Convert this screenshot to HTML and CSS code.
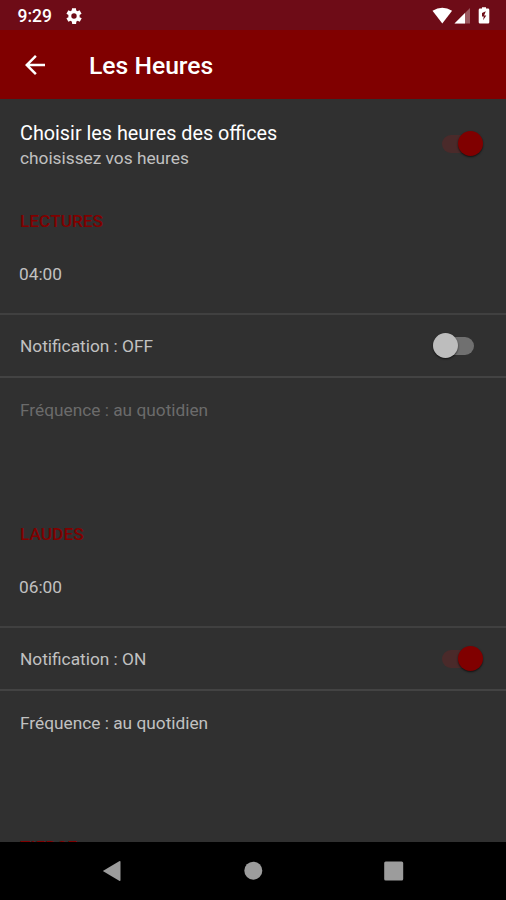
FILE: index.html
```html
<!DOCTYPE html>
<html lang="fr">
<head>
<meta charset="utf-8">
<title>Les Heures</title>
<link rel="stylesheet" href="styles.css">
</head>
<body>
<div class="screen">
  <div class="status">
    <span class="clock">9:29</span>
    <svg class="gear" width="18" height="18" viewBox="0 0 24 24"><path fill="#fff" fill-rule="evenodd" d="M19.400 13.500a7.800 7.800 0 0 0 0-3l2.700-1.600-2.600-4.500-2.900 1.200a8 8 0 0 0-1.700-1L14.600 1.500H9.400l-.5 3.100a8 8 0 0 0-1.700 1L4.500 4.400 1.900 8.900l2.700 1.600a7.800 7.800 0 0 0 0 3l-2.700 1.600 2.600 4.500 2.900-1.200a8 8 0 0 0 1.700 1l.5 3.100h5.200l.3-3.100a8 8 0 0 0 1.700-1l2.900 1.200 2.600-4.500zM12 15.600a3.600 3.600 0 1 1 0-7.200 3.600 3.600 0 0 1 0 7.200z"/></svg>
    <svg class="signals" width="60" height="20" viewBox="0 0 60 20">
      <path fill="#fff" d="M1.500 4.700Q11.300-1.300 21.100 4.700L11.300 17.500z"/>
      <path fill="#fff" fill-opacity=".32" d="M23.500 17.500 39 2v15.500z"/>
      <path fill="#fff" d="M23.500 17.500 34 7v10.500z"/>
      <path fill="#fff" d="M51 1.200h4v1.400h2q1.300 0 1.300 1.300v12.300q0 1.300-1.300 1.300h-8q-1.300 0-1.300-1.300V3.900q0-1.300 1.300-1.300h2z"/>
      <path fill="#6e0c17" d="M54.800 5.200 51 6.900v3.700h1.800l-.7 3.600 3.200-4.700h-2.200z"/>
    </svg>
  </div>
  <header class="appbar">
    <svg class="back" width="30" height="30" viewBox="0 0 24 24"><path fill="#fff" d="M20 11H7.830l5.590-5.590L12 4l-8 8 8 8 1.410-1.410L7.830 13H20v-2z"/></svg>
    <h1 class="title">Les Heures</h1>
  </header>
  <main class="list">
    <div class="intro">
      <div class="intro-text">
        <div class="primary">Choisir les heures des offices</div>
        <div class="secondary">choisissez vos heures</div>
      </div>
      <span class="switch on"></span>
    </div>
    <section class="office">
      <h2 class="heading">LECTURES</h2>
      <div class="time">04:00</div>
      <div class="row"><span>Notification : OFF</span><span class="switch"></span></div>
      <div class="frequency disabled">Fréquence : au quotidien</div>
    </section>
    <section class="office">
      <h2 class="heading">LAUDES</h2>
      <div class="time">06:00</div>
      <div class="row"><span>Notification : ON</span><span class="switch on"></span></div>
      <div class="frequency">Fréquence : au quotidien</div>
    </section>
    <section class="office">
      <h2 class="heading">TIERCE</h2>
    </section>
  </main>
  <nav class="nav">
    <svg width="20" height="22" viewBox="0 0 20 22"><path fill="#9c9c9c" d="M.8 11 17.200 1.200q1.300-.6 1.300.7v18.200q0 1.300-1.300.7z"/></svg>
    <svg width="20" height="20" viewBox="0 0 20 20"><circle cx="10.300" cy="9.700" r="9" fill="#9c9c9c"/></svg>
    <svg width="20" height="20" viewBox="0 0 20 20"><rect x=".2" y=".5" width="19" height="19" rx="1.500" fill="#9c9c9c"/></svg>
  </nav>
</div>
</body>
</html>
```
FILE: styles.css
```css
* { box-sizing: border-box; }
body {
  margin: 0;
  background: #303030;
  font-family: Roboto, "Liberation Sans", sans-serif;
  color: #c1c1c1;
}
h1, h2 { margin: 0; }
svg { display: block; flex: none; }
.screen {
  width: 506px;
  height: 900px;
  display: flex;
  flex-direction: column;
  overflow: hidden;
}
.status {
  flex: none;
  height: 30px;
  display: flex;
  align-items: center;
  padding: 1px 15px 0 17.500px;
  background: #6e0c17;
  color: #fff;
}
.clock {
  width: 47.500px;
  font-size: 17.500px;
  font-weight: 500;
  line-height: 20px;
}
.signals { margin-left: auto; }
.appbar {
  flex: none;
  height: 69px;
  display: flex;
  align-items: center;
  padding: 0 20px;
  background: #800000;
  color: #fff;
}
.title {
  margin-left: 39px;
  font-size: 24.700px;
  font-weight: 500;
  line-height: 30px;
  padding-top: 2px;
}
.list {
  flex: 1;
  min-height: 0;
  overflow: hidden;
}
.intro {
  height: 89px;
  display: flex;
  align-items: center;
  justify-content: space-between;
  padding: 0 20px;
}
.primary {
  padding-top: 3px;
  font-size: 19.800px;
  line-height: 26px;
  color: #fff;
}
.secondary {
  font-size: 17.300px;
  line-height: 23px;
}
.office { height: 313px; }
.heading {
  height: 65px;
  padding: 22px 20px 0;
  font-size: 17.300px;
  font-weight: 500;
  line-height: 22px;
  color: #800000;
}
.time {
  height: 62px;
  padding: 10px 19px 0;
  font-size: 17.300px;
  line-height: 22px;
  border-bottom: 2px solid #404040;
}
.row {
  height: 63px;
  display: flex;
  align-items: center;
  justify-content: space-between;
  padding: 0 20px;
  font-size: 17.300px;
  border-bottom: 2px solid #434343;
}
.frequency {
  padding: 21px 20px 0;
  font-size: 17.300px;
  line-height: 22px;
}
.disabled { color: #6b6b6b; }
.switch {
  position: relative;
  width: 41px;
  height: 18px;
  margin-right: 12px;
  border-radius: 9px;
  background: #707070;
}
.switch::before {
  content: "";
  position: absolute;
  left: 0;
  top: -4px;
  width: 25px;
  height: 25px;
  border-radius: 50%;
  background: #bdbdbd;
  box-shadow: 0 1px 2px rgba(0, 0, 0, .65);
}
.switch.on {
  margin-right: 3px;
  background: #4a2a2a;
}
.switch.on::before {
  left: auto;
  right: 0;
  background: #800000;
}
.nav {
  flex: none;
  height: 58px;
  display: flex;
  align-items: center;
  justify-content: space-between;
  padding: 0 102px;
  background: #000;
}
```
